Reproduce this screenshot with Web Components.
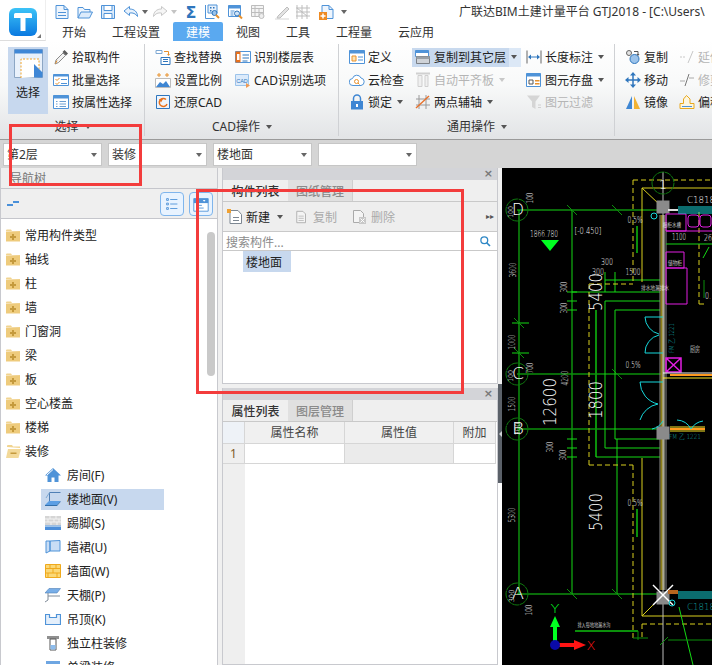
<!DOCTYPE html>
<html lang="zh">
<head>
<meta charset="utf-8">
<title>GTJ2018</title>
<style>
  html, body { margin: 0; padding: 0; }
  body {
    position: relative;
    width: 712px;
    height: 665px;
    overflow: hidden;
    display: flex;
    flex-direction: column;
    background: #f0f0f0;
    color: #222;
    font: 12px/16px "Noto Sans", "Noto Sans CJK SC", sans-serif;
  }
  .row { display: flex; flex: 1; min-height: 0; }
  .mid { width: 276px; margin-left: 4px; display: flex; flex-direction: column; gap: 4px; }
</style>
</head>
<body>
  <top-bar></top-bar>
  <ribbon-bar></ribbon-bar>
  <floor-bar>
    <combo-box style="width:99px">第2层</combo-box>
    <combo-box style="width:99px">装修</combo-box>
    <combo-box style="width:99px">楼地面</combo-box>
    <combo-box style="width:99px"></combo-box>
  </floor-bar>

  <div class="row">
    <nav-tree>
      <tree-row icon="fplus">常用构件类型</tree-row>
      <tree-row icon="fplus">轴线</tree-row>
      <tree-row icon="fplus">柱</tree-row>
      <tree-row icon="fplus">墙</tree-row>
      <tree-row icon="fplus">门窗洞</tree-row>
      <tree-row icon="fplus">梁</tree-row>
      <tree-row icon="fplus">板</tree-row>
      <tree-row icon="fplus">空心楼盖</tree-row>
      <tree-row icon="fplus">楼梯</tree-row>
      <tree-row icon="fminus">装修</tree-row>
      <tree-row child icon="room">房间(F)</tree-row>
      <tree-row child selected icon="floor">楼地面(V)</tree-row>
      <tree-row child icon="skirt">踢脚(S)</tree-row>
      <tree-row child icon="dado">墙裙(U)</tree-row>
      <tree-row child icon="wall">墙面(W)</tree-row>
      <tree-row child icon="ceil">天棚(P)</tree-row>
      <tree-row child icon="drop">吊顶(K)</tree-row>
      <tree-row child icon="column">独立柱装修</tree-row>
      <tree-row child icon="beam">单梁装修</tree-row>
    </nav-tree>

    <div class="mid">
      <dock-panel style="height:216px" first="构件列表" second="图纸管理"><part-list></part-list></dock-panel>
      <dock-panel style="flex:1" first="属性列表" second="图层管理"><prop-table></prop-table></dock-panel>
    </div>

    <split-bar></split-bar>
    <cad-view></cad-view>
  </div>

  <mark-box style="left:9px;top:124px;width:127px;height:56px"></mark-box>
  <mark-box style="left:196px;top:189px;width:262px;height:199px"></mark-box>

<script>
const B = '#4f93d8';
const L = '#dcebfb';
const G = '#bdbdbd';

// all icons are drawn in a 16x16 box unless the caller changes the viewBox
const ICONS = {
  new: `<path d="M2 1.500h8l4 4v9H2z" fill="#eef5fd" stroke="${B}"/><path d="M10 1.500v4h4M4 8.500h8M4 11.500h8" fill="none" stroke="${B}"/>`,
  open: `<path d="M1 14V3.500h5l1.500 2H13V8" fill="#eef5fd" stroke="${B}"/><path d="M1 14l3-6h11.500l-3 6z" fill="${L}" stroke="${B}"/>`,
  save: `<path d="M1.500 1.500h13v13h-13z" fill="${L}" stroke="${B}"/><path d="M4 1.500h8v5H4z" fill="#fff" stroke="${B}"/><path d="M4 9.500h8v5H4z" fill="#fff" stroke="${B}"/>`,
  undo: `<path d="M6.500 2.500L1 7l5.500 4.500V9c3.500-.5 6 .5 8 3.500C14.500 8 11.500 5 6.500 5z" fill="#e9f2fc" stroke="${B}"/>`,
  redo: `<path d="M9.500 2.500L15 7l-5.500 4.500V9c-3.500-.5-6 .5-8 3.500C1.500 8 4.500 5 9.500 5z" fill="#f6f6f6" stroke="#c9c9c9"/>`,
  sigma: `<text x="8" y="14" font-size="16" font-weight="700" text-anchor="middle" fill="#2f76bd" font-family="DejaVu Sans">Σ</text>`,
  calc: `<path d="M1.500 1v13.500h9" fill="none" stroke="${B}"/><path d="M4 1h9v8H4z" fill="#e8f1fb" stroke="${B}"/><path d="M6 3h1.500v1.500H6zM9 3h1.500v1.500H9zM6 6h1.500v1.500H6z" fill="#2f76bd"/><circle cx="10.500" cy="9" r="2.500" fill="#9cc3ea" stroke="#2f76bd"/><path d="M12 11l3 3" stroke="#e8912c" stroke-width="2"/>`,
  query: `<path d="M1.500 1.500h12v11h-12z" fill="#fff" stroke="${B}"/><path d="M1.500 1.500h12v3h-12z" fill="${B}"/><path d="M3.500 7h4M3.500 9h3M3.500 11h3" stroke="${B}"/><circle cx="10" cy="9.500" r="2.500" fill="#cfe3f7" stroke="#2f76bd"/><path d="M12 11.500l3 3" stroke="#e8912c" stroke-width="2"/>`,
  grayCalc: `<path d="M1.500 1.500h12v11h-12z" fill="#f5f5f5" stroke="${G}"/><path d="M1.500 4.500h12M5 1.500v11M9 4.500v8M1.500 8.500h12" stroke="${G}"/><circle cx="11.500" cy="12" r="2.500" fill="#eee" stroke="${G}"/>`,
  pen: `<path d="M1 15h14" stroke="#d5d5d5"/><path d="M4 12l9-9 2 2-9 9H3z" fill="#e3e3e3" stroke="${G}"/>`,
  grid: `<path d="M2 1v14M7 1v14M12 1v14M1 4h14M1 8h14M1 12h14M2 4l5 4M7 8l5 4" fill="none" stroke="${G}"/>`,
  add: `<path d="M3 1.500h7l4 4v9H3z" fill="#eef5fd" stroke="${B}"/><path d="M10 1.500v4h4" fill="none" stroke="${B}"/><path d="M0 8h8v8H0z" fill="#ee8a22"/><path d="M4 9.500v5M1.500 12h5" stroke="#fff" stroke-width="1.500"/>`,
  pick: `<path d="M2 15l1-4 7-7 2.500 2.500-7 7z" fill="#f3f3f3" stroke="#8b8b8b"/><path d="M9.500 3l2-2 3.500 3.500-2 2z" fill="#5c5c5c"/><path d="M2.500 14.500l1.500-3" stroke="#e5902b"/>`,
  batch: `<path d="M.5 2.500h15v11H.5z" fill="#fff" stroke="${B}"/><path d="M.5 2.500h15v2H.5z" fill="${B}"/><path d="M2.500 7l1.500 1.500L6.500 6M2.500 11l1.500 1.500L6.500 10" fill="none" stroke="#e8912c"/><path d="M8 7.500h6M8 11.500h6" stroke="${B}"/>`,
  attr: `<path d="M.5 1.500h15v13H.5z" fill="#fff" stroke="${B}"/><path d="M.5 1.500h15v3H.5z" fill="${B}"/><path d="M3 7.500h1.500M3 10h1.500M3 12.500h1.500M6.500 7.500H13M6.500 10H13M6.500 12.500H13" stroke="#6c9fd2"/>`,
  find: `<path d="M1 1.500h6v3H1z" fill="#fff" stroke="#7ea8d3"/><path d="M6 8.500h9v7H6z" fill="#fff" stroke="#2f76bd"/><path d="M8 10.500h5M8 12.500h5" stroke="#2f76bd"/><path d="M9 2.500h4.500v3" fill="none" stroke="#e8912c"/><path d="M12 5l1.500 2L15 5z" fill="#e8912c"/>`,
  scale: `<path d="M.5 6.500h15v9H.5z" fill="#fff" stroke="${G}"/><path d="M1 15l4-5 3 2 3-3 4 6z" fill="#3e86d3"/><path d="M2 3h4M10 3h4M4 1v4M12 1v4" stroke="#e8912c"/>`,
  restore: `<path d="M1.500 1.500h13v13h-13z" fill="#eef5fd" stroke="#2f76bd"/><path d="M11 5.500A4 4 0 1 0 12 10" fill="none" stroke="#e8711c" stroke-width="1.500"/><path d="M4 5h4L6 8.500z" fill="#e8711c"/>`,
  recog: `<path d="M.5 2.500h15v11H.5z" fill="#fff" stroke="#4f93d8"/><path d="M.5 2.500h5v11h-5z" fill="#e8711c"/><path d="M2 5h2.500v6H2z" fill="#fff"/><path d="M7.500 6h6.500M7.500 9h6.500M7.500 12h5" stroke="#2f76bd"/>`,
  cadopt: `<path d="M.5 2.500h13v11H.5z" fill="${L}" stroke="#9cc3ea"/><text x="7" y="10.500" font-size="5.500" text-anchor="middle" fill="#2f76bd" font-family="Liberation Sans">CAD</text><path d="M11 11l4 2.500-4 2.500z" fill="#ef9a55"/>`,
  define: `<path d="M.5 1.500h15v13H.5z" fill="#fff" stroke="${B}"/><path d="M.5 1.500h15v3H.5z" fill="${B}"/><path d="M3 7h4v5H3z" fill="#fbe3b4" stroke="#e8912c"/><path d="M9 8h5M9 11h5" stroke="${B}"/>`,
  cloud: `<path d="M4 13.500a3.500 3.500 0 0 1-.5-7A4.500 4.500 0 0 1 12 6a3.800 3.800 0 0 1 0 7.500z" fill="#fff" stroke="${B}"/><circle cx="7.500" cy="9.500" r="2" fill="none" stroke="#e8912c"/><path d="M9 11l1.500 1.500" stroke="#e8912c"/>`,
  lock: `<path d="M4.500 7V4.500a3.500 3.500 0 0 1 7 0V7" fill="none" stroke="#3e86d3" stroke-width="1.500"/><path d="M2 7h12v8.500H2z" fill="#3e86d3"/><path d="M7 10h2v3H7z" fill="#fff"/>`,
  copyTo: `<path d="M.5 1.500h13v6H.5z" fill="#fff" stroke="#4f93d8"/><path d="M.5 1.500h13v2.500H.5z" fill="#4f93d8"/><path d="M1.500 7.500h13v7h-13z" fill="#cfd3d8" stroke="#7b8086"/><path d="M1.500 7.500h13V10h-13z" fill="#9aa0a6"/>`,
  align: `<path d="M1 1.500h14" stroke="#d0d0d0" stroke-width="2"/><path d="M3 3.500h4v11H3zM10 3.500h3v11h-3z" fill="#f0f0f0" stroke="#cfcfcf"/>`,
  twoAxis: `<path d="M4 1v14M11 1v14M1 5h14M1 11h14" stroke="#9a9a9a"/><path d="M1 14L14 2" stroke="#e8712c" stroke-width="1.400"/>`,
  dim: `<path d="M1 1.500v13M15 1.500v13" stroke="#666"/><path d="M3 8h10" stroke="#2f76bd"/><path d="M2 8l3-2.500v5zM14 8l-3-2.500v5z" fill="#2f76bd"/>`,
  store: `<path d="M.5 1.500h14v13H.5z" fill="#fff" stroke="${B}"/><path d="M.5 1.500h14v3H.5z" fill="${B}"/><path d="M3 8h4v4H3z" fill="#fff" stroke="#555"/><path d="M9 8h4.500v1.500H9zM9 11h4.500v1.500H9z" fill="#e8912c"/>`,
  filter: `<path d="M1 1.500h13L9.500 7.500V15L6 13V7.500z" fill="#d5d5d5"/><path d="M12 11h3M12 13.500h3" stroke="#d0d0d0"/>`,
  copy: `<circle cx="4" cy="4" r="2.500" fill="#e4e4e4" stroke="#666"/><circle cx="9.500" cy="10" r="4.500" fill="#9cc3ea" stroke="#2f76bd"/><path d="M9 2.500h4v3" fill="none" stroke="#555"/><path d="M11.500 5l1.500 2 1.500-2z" fill="#555"/>`,
  move: `<path d="M8 0l3 3.500H5zM8 16l3-3.500H5zM0 8l3.500-3v6zM16 8l-3.500-3v6z" fill="#2f76bd"/><path d="M3 8h10M8 3v10" stroke="#2f76bd" stroke-width="1.500"/>`,
  mirror: `<path d="M7 2v13H1z" fill="#3e86d3"/><path d="M9 2v13h6z" fill="#f2b233"/>`,
  offset: `<path d="M1 14.500v-5h3.500V5l3-3.500L11 5v4.500h4v5z" fill="#fdf6df" stroke="#e8a91e"/><path d="M3 12.500h10" stroke="#4f93d8"/>`,
  extend: `<path d="M1 8h6" stroke="#c8c8c8" stroke-dasharray="2 1"/><path d="M9 14l5-12" stroke="#c8c8c8"/>`,
  trim: `<path d="M1 9h5M10 6h5" stroke="#aaa"/><path d="M6 14L10 2" stroke="#777"/>`,
  fplus: `<path d="M1 4V3.500q0-1 1-1h4l1 1.500h8v1z" fill="#f1d48f"/><path d="M1 4.500h14v10H1z" fill="#eecb7c"/><path d="M7 7h2v2h2v2H9v2H7v-2H5V9h2z" fill="#c59a3d"/>`,
  fminus: `<path d="M2 4V3q0-1 1-1h4l1 1.500h7V5z" fill="#f1d48f"/><path d="M3 6h13l-2.500 9H1z" fill="#f3d999"/><path d="M5.500 9.500h6V11h-6z" fill="#c59a3d"/>`,
  room: `<path d="M8 1L0 8.500h2.500V15h4v-4.500h3V15h4V8.500H16z" fill="${B}"/><path d="M8 2.500L2 8" stroke="#fff" fill="none"/>`,
  floor: `<path d="M4.500 10V1.500h11" fill="none" stroke="#4f7fb5"/><path d="M4.500 1.500L1 7" stroke="#7ea8d3"/><path d="M4 10h11.500L12 14H0z" fill="#5b9ee4"/><path d="M0 14h12l3.500-4v1l-3.500 4H0z" fill="#326ea9"/>`,
  skirt: `<path d="M0 1h16v9.500H0z" fill="#d5d5d5"/><path d="M0 4h16M0 7h16M5 1v3M11 1v3M3 4v3M9 4v3M14 4v3M6 7v3M12 7v3" stroke="#f2f2f2"/><path d="M0 10.500h16V15H0z" fill="#4c8ed9"/><path d="M0 11.500h16" stroke="#9cc3ea"/>`,
  dado: `<path d="M1 2v12l4-2V2zM5 2l10-.5V12H5z" fill="#c8ddf5" stroke="${B}"/>`,
  wall: `<path d="M.5 1.500h15v13H.5z" fill="#fbd877" stroke="#efa91c"/><path d="M.5 5.500h15M.5 10h15M5 1.500v4M11 1.500v4M8 5.500V10M3 10v4.500M12 10v4.500" stroke="#efa91c"/>`,
  ceil: `<path d="M4 1.500h11.500L12 6H0z" fill="#78aee8" stroke="#4f7fb5" stroke-width=".6"/><path d="M3 6v7M3 9h12M3 13l-3 2" fill="none" stroke="#7f8a97"/>`,
  drop: `<path d="M.5 3.500h4v3h7v-3h4v10H.5z" fill="#e4effb" stroke="${B}" stroke-width="1.200"/>`,
  column: `<path d="M2 1h12v3H2z" fill="#8f8f8f"/><path d="M5 4h6v11H5z" fill="#fff" stroke="#555"/><path d="M5.500 10h5v4.500h-5z" fill="#8dbcec"/>`,
  beam: `<path d="M1 2h14v3H1z" fill="#6ea6e2"/><path d="M1 6h14v3H1z" fill="#4f7fb5"/>`,
  list: `<path d="M4 4h2v2H4zM4 9h2v2H4zM4 14h2v2H4z" fill="none" stroke="#4f93d8"/><path d="M8 5h8M8 10h8M8 15h8" stroke="#4f93d8"/>`,
  win: `<path d="M2 4h16v14H2z" fill="#fff" stroke="#4f93d8"/><path d="M2 4h16v5H2z" fill="#4f93d8"/><path d="M12 5.500h3L13.500 7.500z" fill="#fff"/><path d="M5 11.500h6M5 14.500h8" stroke="#4f93d8"/>`,
  fnew: `<path d="M3 1.500h8l3.500 4v9H3z" fill="#fff" stroke="#7d8792"/><path d="M6 8.500h6M6 11.500h6" stroke="#7d8792"/><path d="M0 0h4v4H0z" fill="#f0a030"/>`,
  fcopy: `<path d="M2 1.500h7l3 3v10H2z" fill="#f4f4f4" stroke="#aaa"/><path d="M4 7h6M4 9.500h6M4 12h6" stroke="#bbb"/>`,
  fdel: `<path d="M1.500 1.500h7l3 3v9h-10z" fill="#f4f4f4" stroke="#aaa"/><path d="M7 8h7v7H7z" fill="#c8c8c8"/><path d="M8.500 9.500l4 4M12.500 9.500l-4 4" stroke="#fff"/>`,
  search: `<circle cx="6.500" cy="6.500" r="4.200" fill="none" stroke="#2e87c5" stroke-width="1.600"/><path d="M9.500 9.500l4 4" stroke="#2e87c5" stroke-width="2"/>`,
  select: `<path d="M.5.500h28v28H.5z" fill="#e9f1fb" stroke="#8ca6c4"/><path d="M.5.500h28v4H.5z" fill="#3f87d6"/><path d="M7 29V10h18v18" fill="#fff" stroke="#f1a42a" stroke-dasharray="2 1.500"/><path d="M20 15l8.500 8.500v5H20z" fill="#3f87d6"/>`,
  logo: `<defs><linearGradient id="lg" x1="0" y1="0" x2="0" y2="1"><stop offset="0" stop-color="#3cc3f7"/><stop offset="1" stop-color="#0a79e0"/></linearGradient></defs><rect width="28" height="28" rx="6" fill="url(#lg)"/><path d="M5 6.500q0-1.500 1.500-1.500h15q1.500 0 1.500 1.500V10h-6.500v13h-5V10H5z" fill="#fff"/>`,
};

class Base extends HTMLElement {
  constructor() {
    super();
    this.attachShadow({ mode: 'open' });
  }

  connectedCallback() {
    this.shadowRoot.innerHTML = `<style>${this.css()}</style>${this.markup()}`;
  }
}

class AppIcon extends Base {
  css() {
    return `:host { display: block; flex: none; line-height: 0; }`;
  }

  markup() {
    const w = this.getAttribute('w') || 16;
    const h = this.getAttribute('h') || w;
    const box = this.getAttribute('box') || '0 0 16 16';
    return `<svg width="${w}" height="${h}" viewBox="${box}">${ICONS[this.getAttribute('name')] || ''}</svg>`;
  }
}

class TopBar extends Base {
  css() {
    return `
      :host { display: flex; flex: none; height: 41px; background: #fff; position: relative; }
      .logo { width: 46px; flex: none; padding: 8px 0 0 9px; box-sizing: border-box; border-right: 1px solid #eee;
              border-bottom: 1px solid #ddd; position: relative; }
      .corner { position: absolute; right: 4px; bottom: 2px; border-left: 4px solid transparent; border-bottom: 4px solid #777; }
      .rest { flex: 1; display: flex; flex-direction: column; min-width: 0; }
      .qat { height: 22px; display: flex; align-items: center; padding-top: 2px; box-sizing: border-box; position: relative; }
      .caret { width: 0; height: 0; border: 3.500px solid transparent; border-top: 4px solid #666; border-bottom: 0; }
      .caret.off { border-top-color: #c4c4c4; }
      .title { margin-left: auto; white-space: nowrap; color: #333; flex: none; width: 253px; overflow: hidden; }
      .tabs { display: flex; height: 19px; padding-left: 3px; }
      .tab { padding: 2px 13px 0; box-sizing: border-box; height: 19px; line-height: 18px; white-space: nowrap; color: #333; }
      .tab.on { background: #5aa9f0; color: #fff; border-radius: 2px 2px 0 0; }
    `;
  }

  markup() {
    const tabs = ['开始', '工程设置', '建模', '视图', '工具', '工程量', '云应用'];
    return `
      <div class="logo"><app-icon name="logo" w="28" box="0 0 28 28"></app-icon><span class="corner"></span></div>
      <div class="rest">
        <div class="qat">
          <app-icon style="margin-left:8px" name="new"></app-icon>
          <app-icon style="margin-left:7px" name="open"></app-icon>
          <app-icon style="margin-left:7px" name="save"></app-icon>
          <app-icon style="margin-left:7px" name="undo"></app-icon>
          <span class="caret" style="margin-left:3px"></span>
          <app-icon style="margin-left:4px" name="redo"></app-icon>
          <span class="caret off" style="margin-left:3px"></span>
          <app-icon style="margin-left:6px" name="sigma"></app-icon>
          <app-icon style="margin-left:5px" name="calc"></app-icon>
          <app-icon style="margin-left:7px" name="query"></app-icon>
          <app-icon style="margin-left:7px" name="grayCalc"></app-icon>
          <app-icon style="margin-left:8px" name="pen"></app-icon>
          <app-icon style="margin-left:5px" name="grid"></app-icon>
          <app-icon style="margin-left:8px" name="add"></app-icon>
          <span class="caret" style="margin-left:6px"></span>
          <span class="title">广联达BIM土建计量平台 GTJ2018 - [C:\\Users\\</span>
        </div>
        <div class="tabs">
          ${tabs.map((t) => `<div class="tab ${t === '建模' ? 'on' : ''}">${t}</div>`).join('')}
        </div>
      </div>
    `;
  }
}

class RibbonItem extends Base {
  css() {
    return `
      :host { display: flex; align-items: center; height: 22.500px; white-space: nowrap; padding-left: ${this.hasAttribute('pad') ? 3 : 0}px; }
      :host([hot]) .wrap { height: 19px; }
      :host([hot]) { padding: 0; }
      .outer { display: flex; align-items: center; height: 19px; }
      :host([hot]) .outer { background: #dce8f6; width: 109px; }
      :host([hot]) .wrap { background: #c8d9ee; padding: 0 3px; }
      .wrap { display: flex; align-items: center; gap: 3px; }
      .wrap span { padding-top: 2px; }
      :host([disabled]) { color: #b5b5b5; }
      .caret { width: 0; height: 0; margin-left: 5px; border: 3.500px solid transparent; border-top: 4px solid #555; border-bottom: 0; }
      :host([hot]) .caret { margin-left: 1.500px; }
      :host([disabled]) .caret { border-top-color: #c8c8c8; }
    `;
  }

  markup() {
    return `
      <div class="outer">
        <div class="wrap"><app-icon name="${this.getAttribute('icon')}"></app-icon><span><slot></slot></span></div>
        ${this.hasAttribute('caret') ? '<span class="caret"></span>' : ''}
      </div>
    `;
  }
}

class RibbonGroup extends Base {
  css() {
    return `
      :host { display: flex; flex-direction: column; flex: none; box-sizing: border-box; padding-top: 5px;
              position: relative; }
      .sep { position: absolute; top: 3px; bottom: 3px; right: 0; width: 1px; background: #cfd1d4; }
      .body { display: flex; height: 70px; padding-left: 10px; }
      .cap { height: 23px; margin-top: -1px; display: flex; align-items: center; justify-content: center; gap: 6px; color: #333; }
      .cap i { width: 0; height: 0; border: 3.500px solid transparent; border-top: 4px solid #555; border-bottom: 0; }
    `;
  }

  markup() {
    const cap = this.getAttribute('cap');
    return `
      <div class="body"><slot></slot></div>
      <div class="cap">${cap ? `<span>${cap}</span><i></i>` : ''}</div>
      ${this.hasAttribute('nosep') ? '' : '<div class="sep"></div>'}
    `;
  }
}

class RibbonBar extends Base {
  css() {
    return `
      :host { display: flex; flex: none; height: 98px; overflow: hidden;
              background: linear-gradient(#ffffff 0%, #f8f9f9 45%, #e2e4e6 100%); }
      .col { display: flex; flex-direction: column; flex: none; }
      .big { margin: 1px 5px 0 -2px; width: 40px; height: 67px; background: #c7d8ee; box-sizing: border-box;
             display: flex; flex-direction: column; align-items: center; padding-top: 2px; gap: 7px; flex: none; }
    `;
  }

  markup() {
    return `
      <ribbon-group cap="选择" style="width:145px">
        <div class="big"><app-icon name="select" w="29" box="0 0 29 29"></app-icon><span>选择</span></div>
        <div class="col">
          <ribbon-item icon="pick">拾取构件</ribbon-item>
          <ribbon-item icon="batch">批量选择</ribbon-item>
          <ribbon-item icon="attr">按属性选择</ribbon-item>
        </div>
      </ribbon-group>
      <ribbon-group cap="CAD操作" style="width:194px">
        <div class="col" style="width:80px">
          <ribbon-item icon="find">查找替换</ribbon-item>
          <ribbon-item icon="scale">设置比例</ribbon-item>
          <ribbon-item icon="restore">还原CAD</ribbon-item>
        </div>
        <div class="col">
          <ribbon-item icon="recog">识别楼层表</ribbon-item>
          <ribbon-item icon="cadopt">CAD识别选项</ribbon-item>
        </div>
      </ribbon-group>
      <ribbon-group cap="通用操作" style="width:276px">
        <div class="col" style="width:63px">
          <ribbon-item icon="define">定义</ribbon-item>
          <ribbon-item icon="cloud">云检查</ribbon-item>
          <ribbon-item icon="lock" caret>锁定</ribbon-item>
        </div>
        <div class="col" style="width:114px">
          <ribbon-item icon="copyTo" caret hot>复制到其它层</ribbon-item>
          <ribbon-item pad icon="align" caret disabled>自动平齐板</ribbon-item>
          <ribbon-item pad icon="twoAxis" caret>两点辅轴</ribbon-item>
        </div>
        <div class="col">
          <ribbon-item icon="dim" caret>长度标注</ribbon-item>
          <ribbon-item icon="store" caret>图元存盘</ribbon-item>
          <ribbon-item icon="filter" disabled>图元过滤</ribbon-item>
        </div>
      </ribbon-group>
      <ribbon-group nosep style="width:200px">
        <div class="col" style="width:54px">
          <ribbon-item icon="copy">复制</ribbon-item>
          <ribbon-item icon="move">移动</ribbon-item>
          <ribbon-item icon="mirror">镜像</ribbon-item>
        </div>
        <div class="col">
          <ribbon-item icon="extend" disabled>延伸</ribbon-item>
          <ribbon-item icon="trim" disabled>修剪</ribbon-item>
          <ribbon-item icon="offset">偏移</ribbon-item>
        </div>
      </ribbon-group>
    `;
  }
}

class ComboBox extends Base {
  css() {
    return `
      :host { display: flex; align-items: center; justify-content: space-between; box-sizing: border-box; height: 23px;
              background: #fff; border: 1px solid #c6c6c6; padding: 0 4px 0 3px; flex: none; color: #333; }
      i { width: 0; height: 0; border: 3.500px solid transparent; border-top: 4px solid #666; border-bottom: 0; }
    `;
  }

  markup() {
    return `<span><slot></slot></span><i></i>`;
  }
}

class FloorBar extends Base {
  css() {
    return `
      :host { display: flex; flex: none; gap: 6px; height: 29px; box-sizing: border-box; padding: 3px 0 0 3px;
              background: #d5d5d5; border-top: 1px solid #9a9a9a; }
    `;
  }

  markup() {
    return `<slot></slot>`;
  }
}

class TreeRow extends Base {
  css() {
    const child = this.hasAttribute('child');
    return `
      :host { display: flex; align-items: center; height: 24px; padding-left: ${child ? 40 : 4}px; box-sizing: border-box; }
      .in { display: flex; align-items: center; height: 21px; gap: ${child ? 6 : 4}px; box-sizing: border-box; white-space: nowrap; }
      .in span { padding-top: 2px; }
      :host([child]) .in { width: 123px; padding-left: 4px; }
      :host([selected]) .in { background: #c7d8ee; }
    `;
  }

  markup() {
    return `<div class="in"><app-icon name="${this.getAttribute('icon')}"></app-icon><span><slot></slot></span></div>`;
  }
}

class NavTree extends Base {
  css() {
    return `
      :host { display: flex; flex-direction: column; flex: none; width: 218px; box-sizing: border-box;
              background: #fff; border-left: 1px solid #c8c9ce; border-right: 1px solid #c8c9ce; position: relative; }
      .head { height: 21px; flex: none; line-height: 22px; padding-left: 9px; color: #777; background: #eee;
              border-bottom: 1px solid #c5c6cc; box-sizing: border-box; }
      .tools { height: 30px; flex: none; display: flex; align-items: center; background: #efefef; box-sizing: border-box;
               border-bottom: 1px solid #c5c6cc; padding: 0 4px 0 6px; }
      .minus { width: 12px; height: 5px; background: linear-gradient(to right, #4a90d9 50%, transparent 50%) 0 3px / 100% 2px no-repeat,
               linear-gradient(to right, transparent 50%, #4a90d9 50%) 0 0 / 100% 2px no-repeat; }
      .btn { width: 24px; height: 24px; box-sizing: border-box; border: 1px solid #7fb5ec; border-radius: 4px; background: #e8f3ff;
             display: flex; align-items: center; justify-content: center; }
      .list { flex: 1; overflow: hidden; padding-top: 4px; }
      .thumb { position: absolute; left: 206px; top: 64px; width: 8px; height: 144px; background: #c9c9c9; border-radius: 4px; }
    `;
  }

  markup() {
    return `
      <div class="head">导航树</div>
      <div class="tools">
        <span class="minus"></span>
        <span class="btn" style="margin-left:auto"><app-icon name="list" w="18" box="0 0 20 20"></app-icon></span>
        <span class="btn" style="margin-left:5px"><app-icon name="win" w="18" box="0 0 20 20"></app-icon></span>
      </div>
      <div class="list"><slot></slot></div>
      <div class="thumb"></div>
    `;
  }
}

class DockPanel extends Base {
  css() {
    return `
      :host { display: flex; flex-direction: column; box-sizing: border-box; min-height: 0;
              border-left: 1px solid #c8c9ce; border-right: 1px solid #c8c9ce; border-bottom: 1px solid #c8c9ce; background: #fff; }
      .title { height: 12px; flex: none; background: #d3d4d8; display: flex; justify-content: flex-end; align-items: center;
               padding-right: 4px; color: #777; font: 700 11px/12px "DejaVu Sans", sans-serif; }
      .tabs { height: 22px; flex: none; display: flex; background: #efefef; border-bottom: 1px solid #c9c9c9; box-sizing: border-box; }
      .tab { width: 65px; text-align: center; line-height: 23px; font-weight: 500; color: #333; box-sizing: border-box; }
      .tab.off { background: #e0e0e0; color: #8a8a8a; border-right: 1px solid #cfcfcf; }
      .body { flex: 1; display: flex; flex-direction: column; min-height: 0; }
    `;
  }

  markup() {
    return `
      <div class="title">×</div>
      <div class="tabs">
        <div class="tab">${this.getAttribute('first')}</div>
        <div class="tab off">${this.getAttribute('second')}</div>
      </div>
      <div class="body"><slot></slot></div>
    `;
  }
}

class PartList extends Base {
  css() {
    return `
      :host { display: flex; flex-direction: column; flex: 1; }
      .bar { height: 30px; flex: none; display: flex; align-items: center; background: #eee; border-bottom: 1px solid #c9c9c9;
             box-sizing: border-box; padding-left: 4px; white-space: nowrap; }
      .bar span:not(.caret):not(.more) { padding-top: 2px; }
      .off { color: #aaa; }
      .caret { width: 0; height: 0; border: 3.500px solid transparent; border-top: 4px solid #555; border-bottom: 0; }
      .more { margin-left: auto; margin-right: 3px; color: #555; font: 8px/10px "DejaVu Sans", sans-serif; }
      .find { height: 19px; flex: none; display: flex; align-items: center; justify-content: space-between; padding: 0 5px 0 3px;
              color: #8b8b8b; border-bottom: 1px solid #c9c9c9; box-sizing: border-box; }
      .find span { padding-top: 3px; }
      .item { margin-left: 20px; width: 45px; height: 21px; line-height: 23px; padding-left: 3px; background: #c7d8ee; color: #222; white-space: nowrap; }
    `;
  }

  markup() {
    return `
      <div class="bar">
        <app-icon name="fnew"></app-icon>
        <span style="margin-left:3px">新建</span>
        <span class="caret" style="margin-left:7px"></span>
        <app-icon style="margin-left:12px" name="fcopy" w="14"></app-icon>
        <span class="off" style="margin-left:4px">复制</span>
        <app-icon style="margin-left:15px" name="fdel"></app-icon>
        <span class="off" style="margin-left:3px">删除</span>
        <span class="more">▸▸</span>
      </div>
      <div class="find"><span>搜索构件...</span><app-icon name="search" w="13"></app-icon></div>
      <div class="item">楼地面</div>
    `;
  }
}

class PropTable extends Base {
  css() {
    return `
      :host { display: grid; flex: 1; grid-template-columns: 22px 100px 109px 42px 1fr; grid-auto-rows: min-content;
              background: linear-gradient(to right, #efefef 22px, #fff 22px); color: #444; }
      div { box-sizing: border-box; text-align: center; border-right: 1px solid #d6d6d6; border-bottom: 1px solid #d6d6d6; white-space: nowrap; }
      .h { height: 22px; line-height: 21px; background: #f0f0f0; }
      .c { height: 20px; line-height: 19px; background: #fff; }
      .corner { background: #eef2f7; }
      .num { background: #efefef; color: #7d5a2a; }
      .gray { background: #ebebeb; }
      .e { border: 0; background: #fff; }
    `;
  }

  markup() {
    return `
      <div class="h corner"></div><div class="h">属性名称</div><div class="h">属性值</div><div class="h">附加</div><div class="e"></div>
      <div class="c num">1</div><div class="c"></div><div class="c gray"></div><div class="c"></div><div class="e"></div>
    `;
  }
}

class SplitBar extends Base {
  css() {
    return `
      :host { display: flex; flex-direction: column; flex: none; width: 4px; background: #fff; }
      .top { height: 216px; background: #f0f0f0; }
      .grip { height: 99px; background: #5b6169; display: flex; align-items: center; justify-content: center; }
      i { width: 0; height: 0; border: 3px solid transparent; border-right: 3px solid #cfd2d6; border-left: 0; }
    `;
  }

  markup() {
    return `<div class="top"></div><div class="grip"><i></i></div>`;
  }
}

class CadView extends Base {
  css() {
    return `
      :host { display: block; flex: 1; background: #000; overflow: hidden; min-width: 0; }
      svg { display: block; }
      text { font-family: "DejaVu Sans", "Noto Sans CJK SC", sans-serif; font-weight: 200; }
    `;
  }

  markup() {
    const g = '#14d814';
    const dg = '#0b8f0b';
    const y = '#d9cf1f';
    const c = '#16d8dc';
    const p = '#e21ee2';

    const line = (x1, y1, x2, y2, col = g, w = 1, extra = '') =>
      `<line x1="${x1}" y1="${y1}" x2="${x2}" y2="${y2}" stroke="${col}" stroke-width="${w}" ${extra}/>`;
    const dash = (x1, y1, x2, y2) => line(x1, y1, x2, y2, y, 1, 'stroke-dasharray="5 3"');
    const poly = (pts, col = g, w = 1) => `<polyline points="${pts}" fill="none" stroke="${col}" stroke-width="${w}"/>`;
    const text = (x, yy, s, len, size, rot = 0, col = '#fff') =>
      `<text x="${x}" y="${yy}" font-size="${size}" fill="${col}" text-anchor="middle" dominant-baseline="central"
        textLength="${len}" lengthAdjust="spacingAndGlyphs" transform="rotate(${rot} ${x} ${yy})">${s}</text>`;
    const ring = (x, yy) => `<circle cx="${x}" cy="${yy}" r="11" fill="none" stroke="#0f7a0f" stroke-dasharray="7 .6"/>`;
    const bubble = (x, yy, s) => ring(x, yy) + text(x + 1, yy, s, 12, 15);
    const tick = (x, yy) => line(x - 5, yy - 5, x + 5, yy + 5, dg);

    let s = '';

    // grid lines and dimensions
    s += line(517, 210, 660, 210) + line(519, 210, 519, 594) + line(572, 210, 572, 594) + line(617, 439, 617, 594);
    s += line(517, 374, 662, 374, dg, 1.500) + line(517, 429, 660, 429, dg, 1.500) + line(517, 594, 660, 594);
    s += line(512, 323, 529, 323) + line(512, 353, 529, 353);
    [[519, 323], [519, 353], [572, 210], [617, 210], [617, 374], [572, 594], [617, 594]].forEach(([a, b]) => { s += tick(a, b); });
    [292, 301, 310, 439, 448, 457].forEach((v) => { s += line(567, v, 577, v); });

    // inner rooms
    s += line(572, 292, 660, 292) + line(605, 301, 660, 301) + line(615, 310, 660, 310);
    s += line(605, 280, 660, 280) + line(605, 272, 605, 292) + line(615, 272, 615, 292);
    s += line(605, 301, 605, 448) + line(615, 310, 615, 439) + line(596, 310, 596, 457, dg, 2);
    s += line(615, 439, 660, 439) + line(605, 448, 660, 448) + line(596, 457, 660, 457);

    // yellow outlines
    s += poly('642,282 642,188 712,188', y) + line(642, 188, 660, 205, y);
    s += dash(633, 180, 712, 180) + dash(633, 180, 633, 284) + dash(589, 284, 633, 284) + dash(589, 284, 589, 465);
    s += dash(589, 465, 633, 465) + dash(633, 465, 633, 638) + dash(642, 624, 712, 624) + dash(642, 624, 642, 640);
    s += poly('642,458 642,616 712,616', y) + line(642, 616, 660, 598, y);
    s += dash(699, 212, 699, 304) + dash(699, 304, 707, 304);

    // main wall
    s += line(660, 215, 660, 590, '#8a8a8a', 1) + line(662, 215, 662, 590, '#8d7f18', 3) + line(664, 215, 664, 590, '#e8e8c8', 1) + line(666, 215, 666, 590, '#8a8a8a', 1);
    s += line(663, 172, 663, 665, '#bdbdbd');
    s += ring(663, 183) + text(663, 184, '1', 8, 13);

    // axis bubbles
    s += bubble(517, 210, 'D') + text(511, 212, '100', 12, 7, -90) + bubble(517, 374, 'C') + text(511, 376, '100', 12, 7, -90);
    s += bubble(517, 429, 'B') + text(518, 429, '300', 13, 7, -90) + bubble(517, 594, 'A') + text(512, 596, '300', 13, 7, -90);

    // columns
    [[663, 207], [663, 433], [663, 598]].forEach(([a, b]) => {
      s += `<rect x="${a - 6.500}" y="${b - 6.500}" width="13" height="13" fill="#8a8a8a"/>`;
    });
    s += line(653, 585, 673, 605, '#fff', 1.500) + line(673, 585, 653, 605, '#fff', 1.500);

    // magenta fittings
    s += `<g fill="none" stroke="${p}">
      <path d="M666 214h20v17h-20zM666 231h46M666 252h18v16h-18zM666 268h21v36h-21z"/>
      <rect x="688" y="215" width="11" height="12" rx="3"/><rect x="700" y="215" width="11" height="12" rx="3"/>
      <path d="M666 358h15v14h-15zM666 358l15 14M681 358l-15 14" stroke-width="1.500"/></g>`;

    // windows
    s += `<g stroke="${c}"><path d="M678 207h34M678 209h34M678 211h34M678 213h34M678 592h34M678 594h34M678 596h34M678 598h34"/></g>`;
    s += line(668, 592, 678, 592, '#b8651d', 4) + line(668, 210, 678, 210, '#ddd', 2);
    s += line(670, 375, 712, 375, '#ff9a1e', 2) + line(663, 373, 712, 373, '#f0f0f0') + line(663, 378, 712, 378, '#ffe928');
    s += line(670, 429, 705, 429, '#ff9a1e', 2) + line(670, 427, 705, 427, '#ffe928') + line(670, 431, 705, 431, '#ffe928');

    // doors
    s += `<g fill="none" stroke="${c}">
      <path d="M645 317h18M645 317a18 18 0 0 0 14 17" stroke-width="1"/>
      <path d="M645 353h18M645 353a18 18 0 0 1 14-18"/>
      <path d="M640 382h23M640 382a23 23 0 0 0 18 22"/>
      <path d="M640 420a23 23 0 0 1 18-16M652 429a17 17 0 0 0 11-8M691 429a17 17 0 0 0-14-9M691 429a17 17 0 0 1 12-8"/>
      <circle cx="654" cy="216" r="3"/><circle cx="672" cy="603" r="3"/></g>`;

    // dark green slope bars and leaders
    s += line(637, 226, 637, 253, dg, 2) + line(637, 509, 637, 537, dg, 2);
    s += line(575, 631, 638, 631, dg, 2) + line(638, 631, 638, 640, dg, 1) + line(633, 638, 648, 638, dg);
    s += line(679, 607, 693, 665) + line(660, 645, 668, 637, dg) + line(668, 640, 712, 640, dg);
    s += line(703, 258, 709, 247) + line(666, 244, 712, 244, g) + line(704, 280, 704, 298, dg);

    // level mark
    s += `<polygon points="541,240 559,240 550,251" fill="#00ff21"/>`;

    // labels
    s += text(544, 234, '1866.780', 28, 8) + text(588, 231, '[-0.450]', 27, 9);
    s += text(513, 270, '3600', 15, 8, -90) + text(512, 342, '1000', 15, 8, -90) + text(512, 404, '1500', 15, 8, -90);
    s += text(530, 368, '700', 11, 8, -90) + text(530, 198, '100', 11, 8, -90) + text(565, 378, '4200', 15, 8, -90);
    s += text(564, 287, '300', 11, 8, -90) + text(564, 308, '300', 11, 8, -90);
    s += text(512, 515, '5300', 15, 8, -90) + text(550, 447, '300', 11, 8, -90) + text(563, 455, '300', 11, 8, -90) + text(529, 610, '100', 11, 8, -90);
    s += text(607, 262, '300', 12, 8) + text(598, 272, '300', 12, 8) + text(633, 272, '1500', 15, 8);
    s += text(635, 220, '0.5%', 15, 8) + text(633, 365, '0.5%', 15, 8) + text(635, 503, '0.5%', 15, 8);
    s += text(595, 292, '5400', 38, 18, -90) + text(595, 400, '1800', 38, 18, -90) + text(595, 512, '5400', 38, 18, -90) + text(549, 402, '12600', 48, 18, -90);
    s += text(701, 200, 'C1818', 28, 8) + text(701, 607, 'C1818', 28, 8, 0, '#10a8a8') + text(679, 237, '1100', 14, 8) + text(708, 238, '26', 8, 8) + text(708, 296, '0.', 6, 8);
    s += text(672, 338, 'FM 乙 1221', 30, 7, -90, '#10a8a8') + text(685, 437, 'FM 乙 1221', 32, 7, 0, '#10a8a8');
    s += text(672, 224, '橱柜水槽', 18, 6) + text(675, 262, '储物柜', 14, 6) + text(695, 349, '厨房', 10, 8);
    s += text(655, 287, '排水地漏排水', 28, 6) + text(594, 624, '排入每地地漏水沟', 33, 6);

    // ucs mark
    s += line(555, 645, 555, 625, '#00ff21', 4) + `<polygon points="550,627 560,627 555,616" fill="#00ff21"/>`;
    s += line(555, 645, 577, 645, '#ff1414', 4) + `<polygon points="574,640 586,645 574,650" fill="#ff1414"/>`;
    s += `<circle cx="555" cy="645" r="5" fill="#0a0aa8"/>`;
    s += text(555, 608, 'Y', 9, 13, 0, '#00ff21') + text(591, 645, 'X', 9, 13, 0, '#ff1414');

    return `<svg width="210" height="497" viewBox="502 168 210 497">${s}</svg>`;
  }
}

class MarkBox extends Base {
  css() {
    return `:host { position: absolute; display: block; border: 3px solid #f33c3c; pointer-events: none; }`;
  }

  markup() {
    return '';
  }
}

customElements.define('app-icon', AppIcon);
customElements.define('top-bar', TopBar);
customElements.define('ribbon-item', RibbonItem);
customElements.define('ribbon-group', RibbonGroup);
customElements.define('ribbon-bar', RibbonBar);
customElements.define('combo-box', ComboBox);
customElements.define('floor-bar', FloorBar);
customElements.define('tree-row', TreeRow);
customElements.define('nav-tree', NavTree);
customElements.define('dock-panel', DockPanel);
customElements.define('part-list', PartList);
customElements.define('prop-table', PropTable);
customElements.define('split-bar', SplitBar);
customElements.define('cad-view', CadView);
customElements.define('mark-box', MarkBox);
</script>
</body>
</html>
